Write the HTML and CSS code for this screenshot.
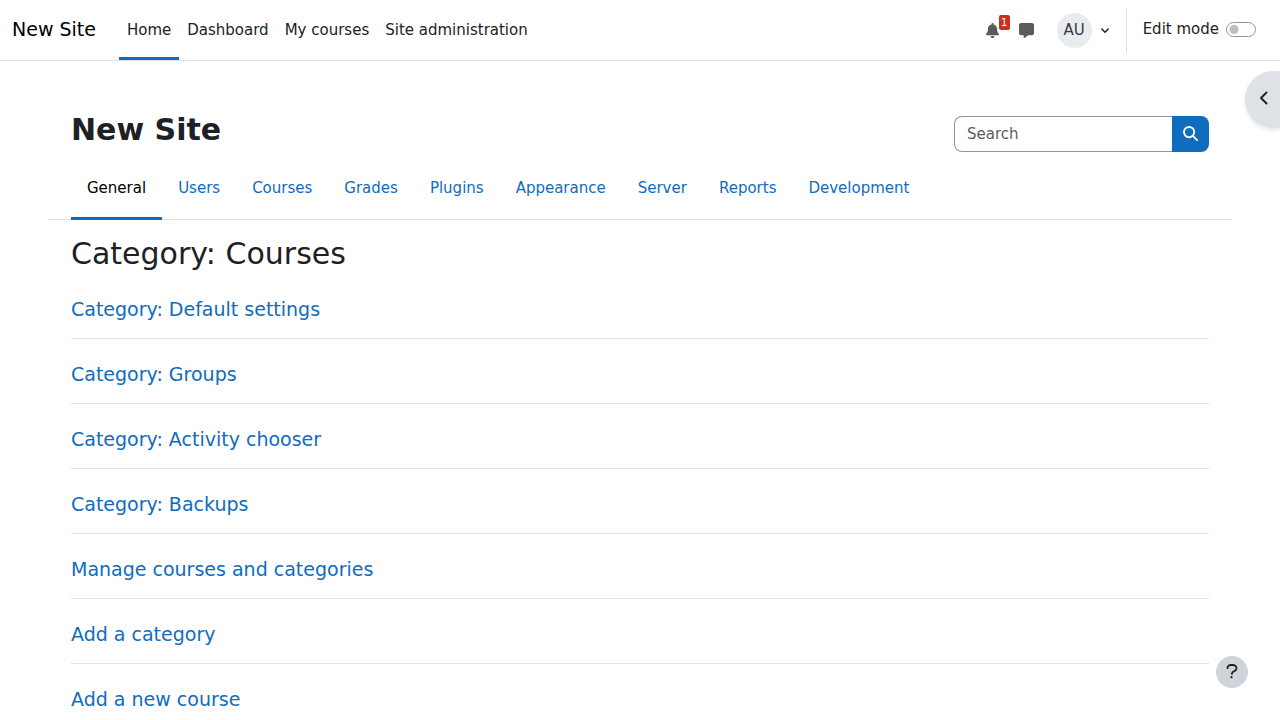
FILE: index.html
```html
<!DOCTYPE html>
<html lang="en">
<head>
<meta charset="utf-8">
<meta name="viewport" content="width=device-width, initial-scale=1">
<title>New Site: Administration</title>
<link rel="stylesheet" href="styles.css">
</head>
<body>
<header class="navbar">
  <a class="brand" href="#">New Site</a>
  <nav class="primary-nav" aria-label="Site navigation">
    <a class="nav-link active" href="#">Home</a>
    <a class="nav-link" href="#">Dashboard</a>
    <a class="nav-link" href="#">My courses</a>
    <a class="nav-link" href="#">Site administration</a>
  </nav>
  <div class="user-nav">
    <button class="icon-button bell" type="button" aria-label="Notifications">
      <svg width="13" height="15" viewBox="0 0 448 512" fill="currentColor" aria-hidden="true"><path d="M224 0c-17.700 0-32 14.300-32 32v19.200C119 66 64 130.600 64 208v18.800c0 47-17.300 92.400-48.500 127.600l-7.400 8.300c-8.400 9.400-10.400 22.900-5.300 34.400S19.400 416 32 416h384c12.600 0 24-7.400 29.200-18.900s3.100-25-5.300-34.400l-7.400-8.300C401.300 319.200 384 273.900 384 226.800V208c0-77.400-55-142-128-156.800V32c0-17.700-14.300-32-32-32zm45.300 493.300c12-12 18.700-28.300 18.700-45.300H160c0 17 6.700 33.300 18.700 45.300S207 512 224 512s33.300-6.700 45.300-18.700z"/></svg>
      <span class="badge">1</span>
    </button>
    <button class="icon-button chat" type="button" aria-label="Messages">
      <svg width="15" height="15" viewBox="0 0 512 512" fill="currentColor" aria-hidden="true"><path d="M64 0C28.700 0 0 28.700 0 64v288c0 35.300 28.700 64 64 64h96v80c0 6.100 3.400 11.600 8.800 14.300s11.900 2.100 16.800-1.500L309.300 416H448c35.300 0 64-28.700 64-64V64c0-35.300-28.700-64-64-64H64z"/></svg>
    </button>
    <button class="user-menu" type="button" aria-label="User menu">
      <span class="avatar">AU</span>
      <svg class="caret" width="10" height="8" viewBox="0 0 10 8" fill="none" stroke="currentColor" stroke-width="1.500" stroke-linecap="round" stroke-linejoin="round" aria-hidden="true"><path d="M1.800 3 5 6.200 8.200 3"/></svg>
    </button>
    <div class="edit-mode">
      <label for="edit-mode">Edit mode</label>
      <input class="switch" id="edit-mode" type="checkbox" role="switch">
    </div>
  </div>
</header>

<button class="drawer-toggle" type="button" aria-label="Open block drawer">
  <svg width="10" height="14" viewBox="0 0 10 14" fill="none" stroke="currentColor" stroke-width="1.900" stroke-linecap="round" stroke-linejoin="round" aria-hidden="true"><path d="M7.500 1.500 2 7l5.500 5.500"/></svg>
</button>

<main class="page">
  <div class="page-header">
    <h1>New Site</h1>
    <form class="search">
      <input class="search-input" type="text" placeholder="Search" aria-label="Search">
      <button class="search-button" type="submit" aria-label="Search">
        <svg width="15" height="15" viewBox="0 0 16 16" fill="none" stroke="currentColor" stroke-width="2" stroke-linecap="round" aria-hidden="true"><circle cx="6.500" cy="6.500" r="5.500"/><path d="m10.500 10.500 4.500 4.500"/></svg>
      </button>
    </form>
  </div>

  <nav class="tabs" aria-label="Administration sections">
    <a class="tab active" href="#">General</a>
    <a class="tab" href="#">Users</a>
    <a class="tab" href="#">Courses</a>
    <a class="tab" href="#">Grades</a>
    <a class="tab" href="#">Plugins</a>
    <a class="tab" href="#">Appearance</a>
    <a class="tab" href="#">Server</a>
    <a class="tab" href="#">Reports</a>
    <a class="tab" href="#">Development</a>
  </nav>

  <section class="content">
    <h2>Category: Courses</h2>
    <h3><a href="#">Category: Default settings</a></h3>
    <h3><a href="#">Category: Groups</a></h3>
    <h3><a href="#">Category: Activity chooser</a></h3>
    <h3><a href="#">Category: Backups</a></h3>
    <h3><a href="#">Manage courses and categories</a></h3>
    <h3><a href="#">Add a category</a></h3>
    <h3><a href="#">Add a new course</a></h3>
  </section>
</main>

<button class="help" type="button" aria-label="Help">
  <svg width="12" height="16" viewBox="0 0 12 16" fill="none" stroke="currentColor" stroke-width="1.800" stroke-linecap="round" stroke-linejoin="round" aria-hidden="true"><path d="M1.500 4.200C1.500 2.200 2.900 1 4.800 1h2.100c2 0 3.600 1.400 3.600 3.200 0 1.200-.6 2.100-1.700 2.700L6.900 8C6.300 8.400 6 8.800 6 9.400v.5"/><circle cx="5.500" cy="13.200" r="1.100" fill="currentColor" stroke="none"/></svg>
</button>
</body>
</html>
```
FILE: styles.css
```css
* {
  box-sizing: border-box;
}

body {
  margin: 0;
  padding-top: 60px;
  background: #fff;
  color: #1d2125;
  font: 15px/22px "DejaVu Sans", sans-serif;
}

a {
  color: #0f6cbf;
  text-decoration: none;
}

button {
  border: 0;
  padding: 0;
  background: none;
  color: inherit;
  font: inherit;
  cursor: pointer;
}

svg {
  display: block;
}

.navbar {
  position: fixed;
  top: 0;
  left: 0;
  right: 0;
  z-index: 2;
  display: flex;
  height: 61px;
  padding: 0 24px 0 12px;
  border-bottom: 1px solid #dee2e6;
  background: #fff;
}

.brand {
  margin-right: 23px;
  color: #000;
  font-size: 19px;
  line-height: 58px;
}

.primary-nav {
  display: flex;
}

.nav-link {
  padding: 0 8px;
  border-top: 3px solid transparent;
  border-bottom: 3px solid transparent;
  color: #1d2125;
  line-height: 54px;
}

.nav-link.active {
  border-bottom-color: #0f6cbf;
}

.user-nav {
  display: flex;
  align-items: center;
  margin-left: auto;
}

.icon-button {
  position: relative;
  padding-top: 1px;
  color: #5b5b5b;
}

.bell {
  margin-right: 20px;
}

.chat {
  margin-right: 23px;
}

.badge {
  position: absolute;
  top: -7px;
  left: 13px;
  width: 11px;
  border-radius: 2px;
  background: #ca3120;
  color: #fff;
  font-size: 10px;
  line-height: 15px;
  text-align: center;
}

.user-menu {
  display: flex;
  align-items: center;
  gap: 8px;
  margin-right: 16px;
}

.avatar {
  width: 35px;
  border-radius: 50%;
  background: #e9ecef;
  color: #343a40;
  line-height: 35px;
}

.edit-mode {
  display: flex;
  align-items: center;
  gap: 7px;
  height: 45px;
  padding: 0 0 2px 16px;
  border-left: 1px solid #dee2e6;
}

.switch {
  appearance: none;
  width: 30px;
  height: 15px;
  margin: 0;
  border: 1px solid #8f959e;
  border-radius: 8px;
  background: radial-gradient(circle at 7px 50%, #bfbfbf 4px, transparent 5px);
}

.switch:checked {
  background: radial-gradient(circle at 21px 50%, #0f6cbf 4px, transparent 5px);
}

.drawer-toggle {
  position: fixed;
  top: 71px;
  right: 0;
  z-index: 1;
  display: flex;
  align-items: center;
  width: 35px;
  height: 57px;
  padding: 0 0 3px 14px;
  border-radius: 200px 0 0 200px;
  background: #dee2e6;
  box-shadow: 0 2px 4px rgba(0, 0, 0, 0.1);
}

.page {
  padding: 48px 48px 16px;
}

.page-header {
  display: flex;
  align-items: flex-start;
  justify-content: space-between;
  padding: 0 23px;
}

h1,
h2,
h3 {
  margin: 0;
  font-weight: 400;
}

h1 {
  padding: 4px 0 8px;
  font-size: 30px;
  font-weight: 700;
  line-height: 36px;
}

.search {
  display: flex;
  width: 255px;
  height: 36px;
  margin-top: 8px;
}

.search-input {
  flex: 1;
  min-width: 0;
  padding: 0 12px;
  border: 1px solid #8f959e;
  border-right: 0;
  border-radius: 8px 0 0 8px;
  color: #495057;
  font: inherit;
}

.search-input::placeholder {
  color: #5b5b5b;
  opacity: 1;
}

.search-button {
  display: flex;
  align-items: center;
  justify-content: center;
  width: 37px;
  padding-bottom: 1px;
  border-radius: 0 8px 8px 0;
  background: #0f6cbf;
  color: #fff;
}

.tabs {
  display: flex;
  padding: 0 23px;
  border-bottom: 1px solid #dee2e6;
}

.tab {
  margin-bottom: -1px;
  padding: 0 16px;
  border-top: 3px solid transparent;
  border-bottom: 3px solid transparent;
  line-height: 58px;
}

.tab.active {
  border-bottom-color: #0f6cbf;
  color: #000;
}

.content {
  padding: 16px 23px;
}

h2 {
  margin-bottom: 8px;
  font-size: 30px;
  line-height: 36px;
}

h3 {
  padding: 17px 0;
  font-size: 19px;
  line-height: 24px;
}

h3 + h3 {
  padding-top: 23px;
  border-top: 1px solid #e2e3e4;
}

.help {
  position: fixed;
  right: 32px;
  bottom: 32px;
  display: flex;
  align-items: center;
  justify-content: center;
  width: 32px;
  height: 32px;
  border-radius: 50%;
  background: #ced4da;
}
```
